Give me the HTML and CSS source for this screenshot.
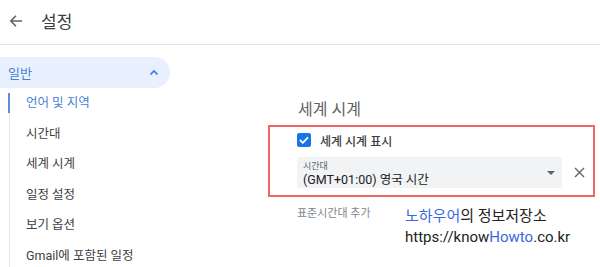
FILE: index.html
```html
<!DOCTYPE html>
<html lang="ko">
<head>
<meta charset="utf-8">
<link rel="stylesheet" href="styles.css">
</head>
<body>
<div class="page">
  <header class="topbar">
    <svg class="back" width="14" height="14" viewBox="0 0 14 14"><path d="M13 7H2.5M7 1.8L1.8 7 7 12.2" fill="none" stroke="#5f6368" stroke-width="1.6"/></svg>
    <span class="title">설정</span>
  </header>
  <div class="body">
    <aside class="sidebar">
      <div class="pill">
        <span>일반</span>
        <svg width="10" height="7" viewBox="0 0 10 7"><path d="M1.5 5.5L5 2l3.5 3.5" fill="none" stroke="#3b78e7" stroke-width="1.6"/></svg>
      </div>
      <ul class="nav">
        <li class="active">언어 및 지역</li>
        <li>시간대</li>
        <li>세계 시계</li>
        <li>일정 설정</li>
        <li>보기 옵션</li>
        <li>Gmail에 포함된 일정</li>
      </ul>
    </aside>
    <main class="main">
      <h2 class="heading">세계 시계</h2>
      <div class="box">
        <label class="check">
          <span class="cb"><svg width="10" height="8" viewBox="0 0 10 8"><path d="M1 4l2.8 2.8L9 1.3" fill="none" stroke="#fff" stroke-width="1.8"/></svg></span>
          <span class="check-label">세계 시계 표시</span>
        </label>
        <div class="row">
          <div class="select">
            <div class="select-text">
              <span class="select-label">시간대</span>
              <span class="select-value">(GMT+01:00) 영국 시간</span>
            </div>
            <svg class="caret" width="8" height="4" viewBox="0 0 8 4"><path d="M0 0h8L4 4z" fill="#5f6368"/></svg>
          </div>
          <svg class="close" width="11" height="11" viewBox="0 0 11 11"><path d="M1 1l9 9M10 1l-9 9" fill="none" stroke="#5f6368" stroke-width="1.4"/></svg>
        </div>
      </div>
      <div class="add">표준시간대 추가</div>
    </main>
  </div>
  <div class="watermark">
    <div><span class="blue">노하우어</span>의 정보저장소</div>
    <div class="url">https://know<span class="blue">Howto</span>.co.kr</div>
  </div>
</div>
</body>
</html>
```
FILE: styles.css
```css
html, body { margin: 0; padding: 0; background: #fff; }
body { font-family: Roboto, "Noto Sans CJK KR", sans-serif; color: #3c4043; }
.page { position: relative; width: 600px; height: 267px; overflow: hidden; }
.topbar { border-bottom: 1px solid #e3e3e3; display: flex; align-items: center; box-sizing: border-box; height: 45px; }
.back { margin-left: 9px; margin-top: -2px; }
.title { margin-left: 18px; font-size: 17px; color: #3c4043; margin-top: -3px; }
.body { display: flex; }
.sidebar { width: 170px; padding-top: 12px; }
.pill { height: 31px; background: #e8f0fe; border-radius: 0 16px 16px 0; display: flex; align-items: center; justify-content: space-between; padding: 0 11px 0 8px; box-sizing: border-box; font-size: 13px; color: #4a7fd6; }
.nav { list-style: none; margin: 5px 0 0 9px; padding: 0; border-left: 1px solid #e6e6e6; }
.nav li { height: 30.5px; line-height: 20px; padding-left: 16px; font-size: 12.5px; color: #3c4043; position: relative; }
.nav li.active { color: #4a7fd6; }
.nav li.active::before { content: ""; position: absolute; left: -2px; top: 0; width: 2px; height: 20px; background: #5b8fd0; }
.main { padding-left: 98px; padding-top: 0; flex: 1; }
.heading { margin: 55px 0 0 30px; font-weight: 400; font-size: 16px; color: #5f6368; line-height: 20px; }
.box { margin-top: 5px; width: 327px; height: 72px; border: 2px solid #f06565; box-sizing: border-box; padding: 5px 0 0 27px; }
.check { display: flex; align-items: center; height: 16px; }
.cb { width: 14px; height: 14px; border-radius: 2px; background: #1a73e8; display: flex; align-items: center; justify-content: center; }
.check-label { margin-left: 9px; font-size: 12px; font-weight: 500; color: #3c4043; }
.row { display: flex; align-items: center; margin-top: 9px; }
.select { width: 265px; height: 31px; background: #f1f3f4; border-radius: 3px 3px 0 0; display: flex; align-items: center; justify-content: space-between; padding: 0 7px 0 6px; box-sizing: border-box; }
.select-text { display: flex; flex-direction: column; padding-top: 2px; }
.select-label { font-size: 9px; color: #5f6368; line-height: 11px; }
.select-value { font-size: 12.5px; color: #202124; line-height: 15px; }
.close { margin-left: 12px; }
.add { margin: 7px 0 0 29px; font-size: 11px; color: #80868b; }
.watermark { position: absolute; left: 405px; top: 206px; font-size: 15px; color: #222; line-height: 21px; }
.blue { color: #3a66e0; }
```
